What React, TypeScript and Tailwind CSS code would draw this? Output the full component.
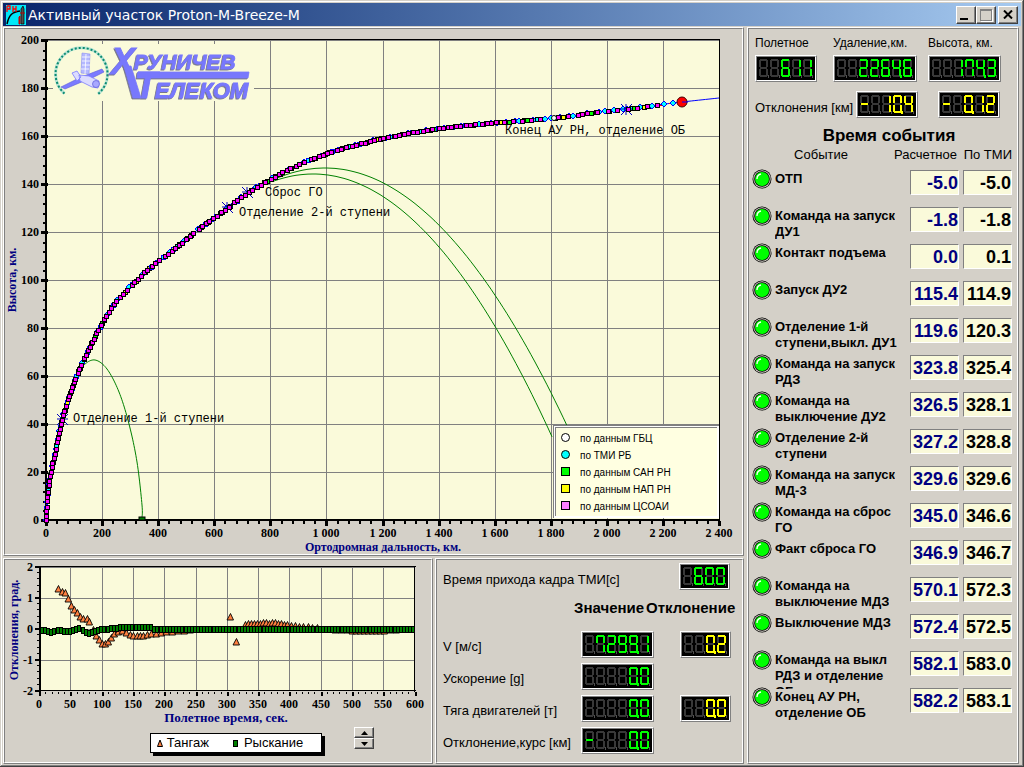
import React from 'react'

type Pt = [number, number]

const events = [
  { name: 'ОТП', plan: '-5.0', tmi: '-5.0' },
  { name: 'Команда на запуск\nДУ1', plan: '-1.8', tmi: '-1.8' },
  { name: 'Контакт подъема', plan: '0.0', tmi: '0.1' },
  { name: 'Запуск ДУ2', plan: '115.4', tmi: '114.9' },
  { name: 'Отделение 1-й\nступени,выкл. ДУ1', plan: '119.6', tmi: '120.3' },
  { name: 'Команда на запуск\nРДЗ', plan: '323.8', tmi: '325.4' },
  { name: 'Команда на\nвыключение ДУ2', plan: '326.5', tmi: '328.1' },
  { name: 'Отделение 2-й\nступени', plan: '327.2', tmi: '328.8' },
  { name: 'Команда на запуск\nМД-3', plan: '329.6', tmi: '329.6' },
  { name: 'Команда на сброс\nГО', plan: '345.0', tmi: '346.6' },
  { name: 'Факт сброса ГО', plan: '346.9', tmi: '346.7' },
  { name: 'Команда на\nвыключение МДЗ', plan: '570.1', tmi: '572.3' },
  { name: 'Выключение МДЗ', plan: '572.4', tmi: '572.5' },
  { name: 'Команда на выкл\nРДЗ и отделение\nОБ', plan: '582.1', tmi: '583.0' },
  { name: 'Конец АУ РН,\nотделение ОБ', plan: '582.2', tmi: '583.1' },
]

const readings = [
  { name: 'V [м/с]', value: ' 7299,1', dev: '  0,2' },
  { name: 'Ускорение [g]', value: '    0,0', dev: '' },
  { name: 'Тяга двигателей [т]', value: '    0,0', dev: '  0,0' },
  { name: 'Отклонение,курс [км]', value: '-   0,0', dev: '' },
]

// ascent track, chart coordinates
const track: Pt[] = [
  [46, 520], [47, 500], [50, 476], [55, 452], [62, 419], [74, 382], [88, 350], [102, 323],
  [113, 305], [125, 292], [147, 270], [170, 252], [200, 228], [227, 208], [247, 193],
  [272, 178], [297, 165], [317, 157], [340, 149], [367, 142], [383, 138], [420, 131],
  [450, 127], [480, 124], [530, 120], [563, 117], [597, 112], [627, 109], [657, 105],
  [682, 102], [719, 98],
]

const smooth = (pts: Pt[]) => {
  const out: Pt[] = []
  for (let i = 0; i < pts.length - 1; i++) {
    const a = pts[Math.max(i - 1, 0)]
    const b = pts[i]
    const c = pts[i + 1]
    const d = pts[Math.min(i + 2, pts.length - 1)]
    for (let k = 0; k < 12; k++) {
      const t = k / 12
      const f = (n: 0 | 1) =>
        0.5 *
        (2 * b[n] +
          (c[n] - a[n]) * t +
          (2 * a[n] - 5 * b[n] + 4 * c[n] - d[n]) * t * t +
          (3 * b[n] - a[n] - 3 * c[n] + d[n]) * t * t * t)
      out.push([f(0), f(1)])
    }
  }
  out.push(pts[pts.length - 1])
  return out
}

// points spaced along the line; the step list is repeated
const walk = (pts: Pt[], steps: number[], endX: number) => {
  const out: Pt[] = []
  let left = 0
  let n = 0
  for (let i = 1; i < pts.length; i++) {
    const [x0, y0] = pts[i - 1]
    const [x1, y1] = pts[i]
    const len = Math.hypot(x1 - x0, y1 - y0)
    let pos = left
    while (pos < len) {
      const x = x0 + ((x1 - x0) * pos) / len
      if (x > endX) return out
      out.push([Math.round(x), Math.round(y0 + ((y1 - y0) * pos) / len)])
      pos += steps[n++ % steps.length]
    }
    left = pos - len
  }
  return out
}

const line = smooth(track)
const toPoints = (pts: Pt[]) => pts.map((p) => p.join(',')).join(' ')
const under = walk(line, [4, 5, 3, 6], 655)
const magenta = walk(line, [4, 5, 4, 6, 4, 5, 7, 4, 5], 490).concat(
  [487, 491, 496, 504, 513, 522, 531, 540, 558, 568, 578, 582, 587, 597, 608, 617, 628, 637, 647, 657].map((x) => {
    const p = line.find((q) => q[0] >= x) || line[0]
    return [x, Math.round(p[1])] as Pt
  }),
)
const underColors = ['#00ffff', '#00ff00', '#ffff00', '#00ffff', '#00ff00', '#00ffff', '#ffff00']

const parabola = (px: number, py: number, a: number, from: number, to: number) => {
  const out: Pt[] = []
  for (let x = from; x <= to; x += 4) out.push([x, Math.round((py + a * (x - px) ** 2) * 10) / 10])
  return out
}
const stage1 = smooth([[76, 378], [84, 365], [95, 360], [107, 369], [119, 392], [129, 424], [137, 462], [142, 505], [142, 518]])
const stage2 = parabola(325, 168, 0.0044, 271, 567)
const fairing = parabola(313, 174, 0.0046, 272, 553)

const pitch: Pt[] = [
  [58, 589], [62, 592], [65, 593], [68, 599], [71, 606], [74, 610], [77, 613], [80, 617], [83, 619],
  [87, 619], [89, 622], [93, 630], [96, 636], [99, 640], [102, 644], [105, 644], [108, 642], [111, 638],
  [114, 634], [118, 632], [122, 631], [126, 633], [130, 635], [133, 636], [137, 636], [140, 636],
  [143, 636], [147, 635], [151, 634], [156, 634], [161, 633], [166, 632], [172, 632], [178, 631],
  [184, 631], [190, 630], [230, 617], [236, 642],
  [245, 625], [248, 624], [251, 624], [254, 624], [257, 624], [260, 624], [263, 623], [266, 623], [269, 624],
  [272, 623], [275, 623], [278, 624], [281, 624], [284, 625], [287, 625], [291, 626], [295, 626],
  [299, 627], [303, 627], [308, 627], [312, 628], [317, 628],
  [335, 630], [341, 630], [347, 630], [352, 631], [356, 631], [360, 631], [364, 631], [368, 631],
  [372, 631], [376, 631], [380, 631], [384, 631], [390, 630], [396, 630],
]

const yawY = (i: number) => {
  const start = [630, 630, 631, 632, 631, 630, 630, 631, 631, 631, 630, 629, 628, 630, 632, 633, 632, 631, 630, 629, 629, 629, 628, 628, 628]
  if (i < start.length) return start[i]
  return i < 36 ? 627 : 629
}

// a..g: top, upper right, lower right, bottom, lower left, upper left, middle
const segBoxes = [
  [1, 0, 7, 2], [7, 1, 2, 7], [7, 10, 2, 7], [1, 16, 7, 2], [0, 10, 2, 7], [0, 1, 2, 7], [1, 8, 7, 2],
]
const segMap: Record<string, string> = {
  '0': '012345', '1': '12', '2': '01346', '3': '01236', '4': '1256', '5': '02356',
  '6': '023456', '7': '0125', '8': '0123456', '9': '012356', '-': '6', ' ': '',
}

const Lcd = ({ value, color = '#00ff00' }: { value: string; color?: string }) => {
  const cells: { ch: string; comma: boolean }[] = []
  for (const ch of value) {
    if (ch === ',') cells[cells.length - 1].comma = true
    else cells.push({ ch, comma: false })
  }
  const width = cells.length * 11 + 3
  return (
    <div className="w-fit shrink-0 border border-t-white border-l-white border-r-[#808080] border-b-[#808080]">
      <div className="border border-t-[#808080] border-l-[#808080] border-r-white border-b-white bg-black">
        <svg width={width} height={23} role="img" aria-label={value.trim()} shapeRendering="crispEdges" className="block">
          {cells.map((cell, i) => (
            <g key={i} transform={`translate(${i * 11 + 2} 2)`}>
              {segBoxes.map(([x, y, w, h], s) => (
                <rect key={s} x={x} y={y} width={w} height={h} fill="#383838" />
              ))}
              {segBoxes.map(([x, y, w, h], s) =>
                segMap[cell.ch].includes(String(s)) ? <rect key={s} x={x} y={y} width={w} height={h} fill={color} /> : null,
              )}
              <rect x={9} y={16} width={1} height={3} fill={cell.comma ? color : '#505050'} />
              {cell.comma && <rect x={8} y={17} width={2} height={2} fill={color} />}
            </g>
          ))}
        </svg>
      </div>
    </div>
  )
}

const Panel = ({ className = '', children }: { className?: string; children: React.ReactNode }) => (
  <section className="border border-t-white border-l-white border-r-[#808080] border-b-[#808080]">
    <div className={`h-full border border-t-[#808080] border-l-[#808080] border-r-white border-b-white ${className}`}>
      {children}
    </div>
  </section>
)

const Led = () => (
  <svg width="20" height="20" viewBox="0 0 20 20" className="block shrink-0">
    <circle cx="10" cy="10" r="9.5" fill="#000" />
    <circle cx="10" cy="10" r="8.7" fill="#d4d0c8" />
    <circle cx="10" cy="10" r="7.8" fill="#000" />
    <circle cx="10" cy="10" r="7" fill="#00ff00" />
    <path d="M5 10a5 5 0 0 1 4-5" fill="none" stroke="#fff" strokeWidth="1.3" />
  </svg>
)

const Logo = () => (
  <g>
    <rect x="53" y="44" width="201" height="57" fill="#fafada" />
    <path d="M64.5 93.5A26 26 0 1 1 98 94" fill="none" stroke="#b8e4d4" strokeWidth="3" />
    <path d="M64.5 93.5A26 26 0 1 1 98 94" fill="none" stroke="#0a8a70" strokeWidth="2" strokeDasharray="2 2" />
    <path d="M61 87l20-10 3 4-19 8zM84 76l18-7 2 3-16 8z" fill="#7b7bff" stroke="#5a5ad8" strokeWidth=".6" />
    <path d="M82 53l8 1-1 20-8-1z" fill="#b4b8ff" stroke="#8c90f0" strokeWidth=".6" />
    <path d="M82 57h8M82 61h8M82 65h8M81 69h8M86 54l-1 20" stroke="#fff" strokeWidth=".8" />
    <path d="M72 73l5-2 4 6-4 4zM79 75l10 1 10 5-1 7-6-1-12-6z" fill="#dcdcff" stroke="#7b7bff" strokeWidth=".8" />
    <circle cx="96" cy="84" r="3.5" fill="#a8a8ff" stroke="#5a5ad8" strokeWidth=".7" />
    <g
      className="drop-shadow-[-1px_1px_0_#77778c]"
      fill="#7878fc"
      stroke="#7878fc"
      strokeWidth=".8"
      fontFamily="'Liberation Sans', sans-serif"
      fontWeight="700"
      fontStyle="italic"
    >
      <text x="111" y="74" fontSize="36">Х</text>
      <polygon points="124,66 131,66 141,98 133,98" />
      <text x="134" y="69" fontSize="21">РУНИЧЕВ</text>
      <polygon points="138,72 249,72 248,78 137,78" />
      <text x="135" y="98" fontSize="36">Т</text>
      <text x="155" y="98" fontSize="22">ЕЛЕКОМ</text>
    </g>
  </g>
)

const Star = ({ x, y }: { x: number; y: number }) => (
  <path d={`M${x - 5} ${y}h11M${x} ${y - 5}v11M${x - 5} ${y - 5}l11 11M${x + 6} ${y - 5}l-11 11`} stroke="#0000c0" fill="none" />
)

const seriesLegend = [
  { label: 'по данным ГБЦ', color: '#ffffff', round: true },
  { label: 'по ТМИ РБ', color: '#00ffff', round: true },
  { label: 'по данным САН РН', color: '#00ff00', round: false },
  { label: 'по данным НАП РН', color: '#ffff00', round: false },
  { label: 'по данным ЦСОАИ', color: '#ff80ff', round: false },
]

const AscentChart = () => {
  const gx = (i: number) => Math.round(46 + (i * 673) / 12)
  const gy = (i: number) => 520 - i * 48
  return (
    <svg viewBox="5 29 737 525" className="block h-auto w-full" fontFamily="'Liberation Serif', serif" fontSize="12" fontWeight="700">
      <g shapeRendering="crispEdges">
        <rect x="46" y="41" width="674" height="479" fill="#fafada" />
        {Array.from({ length: 11 }, (_, i) => (
          <rect key={i} x={gx(i + 1)} y="41" width="1" height="479" fill="#808080" />
        ))}
        {Array.from({ length: 10 }, (_, i) => (
          <rect key={i} x="46" y={gy(i + 1)} width="673" height="1" fill="#808080" />
        ))}
      </g>
      <Logo />
      <g shapeRendering="crispEdges">
        <rect x="45" y="39" width="675" height="1" />
        <rect x="719" y="39" width="1" height="482" />
        <rect x="45" y="39" width="2" height="482" />
        <rect x="45" y="519" width="675" height="2" />
        {Array.from({ length: 51 }, (_, i) => (
          <rect key={i} x={i % 5 ? 43 : 41} y={Math.round(520 - i * 9.6) - (i % 5 ? 0 : 1)} width={i % 5 ? 2 : 7} height={i % 5 ? 2 : 3} />
        ))}
        {Array.from({ length: 61 }, (_, i) => (
          <rect key={i} x={Math.round(46 + (i * 673) / 60) - 1} y="521" width={i % 5 ? 2 : 3} height={i % 5 ? 3 : 5} />
        ))}
      </g>
      {Array.from({ length: 11 }, (_, i) => (
        <text key={i} x="39" y={gy(i) + 4} textAnchor="end">{i * 20}</text>
      ))}
      {Array.from({ length: 13 }, (_, i) => (
        <text key={i} x={gx(i)} y="537" textAnchor="middle">
          {i < 5 ? i * 200 : `${Math.floor(i / 5)} ${String((i * 200) % 1000).padStart(3, '0')}`}
        </text>
      ))}
      <text x="383" y="551" textAnchor="middle" fill="#000080">Ортодромная дальность, км.</text>
      <text transform="translate(16 280) rotate(-90)" textAnchor="middle" fill="#000080">Высота, км.</text>

      <g fill="none" stroke="#008000">
        <polyline points={toPoints(stage1)} />
        <polyline points={toPoints(stage2)} />
        <polyline points={toPoints(fairing)} />
      </g>
      <rect x="139" y="517" width="6" height="3" fill="#008000" stroke="#000" />
      <polyline points={toPoints(line)} fill="none" stroke="#0000ff" />
      <g shapeRendering="crispEdges">
        {under.map(([x, y], i) =>
          i % 4 === 0 || (x > 490 && i % 3 === 0) ? (
            <path key={i} d={`M${x - 3} ${y}l3 -3 3 3 -3 3z`} fill="#00ffff" stroke="#0000ff" />
          ) : (
            <g key={i}>
              <rect x={x - 2} y={y - 2} width="5" height="5" fill={i % 3 ? '#000' : '#0000ff'} />
              <rect x={x - 1} y={y - 1} width="3" height="3" fill={underColors[i % 7]} />
            </g>
          ),
        )}
        <path d="M660 105h4M669 103h5" stroke="#ff0000" />
        <path d="M661 104l3-3 3 3-3 3zM670 103l3-3 3 3-3 3z" fill="#00ffff" stroke="#0000ff" />
      </g>
      <Star x={62} y={419} />
      <Star x={227} y={207} />
      <Star x={247} y={192} />
      <Star x={626} y={109} />
      <g shapeRendering="crispEdges">
        {magenta.map(([x, y], i) => (
          <g key={i}>
            <rect x={x - 2} y={y - 2} width="5" height="5" />
            <rect x={x - 1} y={y - 1} width="3" height="3" fill="#ff00ff" />
          </g>
        ))}
      </g>
      <circle cx="554" cy="118" r="2.5" fill="#fff" stroke="#000" />
      <circle cx="682" cy="102" r="5" fill="#ff0000" stroke="#400000" />
      <path d="M682 102h6" stroke="#0000ff" />

      <g fontFamily="'Liberation Mono', monospace" fontSize="12" fontWeight="400">
        <text x="73" y="422">Отделение 1-й ступени</text>
        <text x="239" y="216">Отделение 2-й ступени</text>
        <text x="265" y="196">Сброс ГО</text>
        <text x="505" y="134">Конец АУ РН, отделение ОБ</text>
      </g>

      <g fontFamily="'Liberation Sans', sans-serif" fontSize="10" fontWeight="400">
        <g shapeRendering="crispEdges">
          <rect x="553" y="425" width="166" height="93" fill="#808080" />
          <rect x="554" y="426" width="165" height="92" fill="#fff" />
          <rect x="555" y="427" width="162" height="89" fill="#808080" />
          <rect x="556" y="428" width="161" height="88" fill="#ffffe1" />
        </g>
        {seriesLegend.map((s, i) => (
          <g key={s.label} stroke="#000">
            {s.round ? (
              <circle cx="565.5" cy={437.5 + i * 17} r="4" fill={s.color} />
            ) : (
              <rect x="561.5" y={433.5 + i * 17} width="8" height="8" fill={s.color} />
            )}
            <text x="580" y={442 + i * 17} stroke="none">{s.label}</text>
          </g>
        ))}
      </g>
    </svg>
  )
}

const DeviationChart = () => {
  const gx = (i: number) => Math.round(39 + i * 31.3)
  return (
    <svg viewBox="5 560 426 167" className="block h-auto w-full" fontFamily="'Liberation Serif', serif" fontSize="12" fontWeight="700">
      <g shapeRendering="crispEdges">
        <rect x="40" y="567" width="375" height="124" fill="#fafada" />
        {Array.from({ length: 11 }, (_, i) => (
          <rect key={i} x={gx(i + 1)} y="567" width="1" height="124" fill="#808080" />
        ))}
        {[567, 598, 629, 660].map((y) => (
          <rect key={y} x="40" y={y} width="375" height="1" fill="#808080" />
        ))}
        <rect x="39" y="566" width="377" height="1" />
        <rect x="414" y="566" width="1" height="126" />
        <rect x="39" y="566" width="2" height="126" />
        <rect x="39" y="690" width="377" height="1" />
        {Array.from({ length: 21 }, (_, i) => (
          <rect key={i} x={i % 5 ? 37 : 35} y={Math.round(566 + i * 6.2)} width={i % 5 ? 2 : 4} height={i % 5 ? 1 : 2} />
        ))}
        {Array.from({ length: 61 }, (_, i) => (
          <rect key={i} x={Math.round(39 + i * 6.26)} y="692" width={i % 5 ? 1 : 2} height={i % 5 ? 2 : 4} />
        ))}
      </g>
      {[2, 1, 0, -1, -2].map((v, i) => (
        <text key={v} x="33" y={571 + i * 31} textAnchor="end">{v}</text>
      ))}
      {Array.from({ length: 13 }, (_, i) => (
        <text key={i} x={gx(i)} y="708" textAnchor="middle">{i * 50}</text>
      ))}
      <text x="226" y="722" textAnchor="middle" fontSize="13" fill="#000080">Полетное время, сек.</text>
      <text transform="translate(18 630) rotate(-90)" textAnchor="middle" fill="#000080">Отклонения, град.</text>
      {pitch.map(([x, y], i) => (
        <path key={i} d={`M${x - 3} ${y + 3}h6.500l-3-6.500z`} fill="#ff8040" stroke="#000" strokeWidth=".9" />
      ))}
      <g shapeRendering="crispEdges">
        {Array.from({ length: 120 }, (_, i) => {
          const x = Math.round(40 + i * 3.12)
          return (
            <g key={i}>
              <rect x={x} y={yawY(i) - 3} width="4" height="7" />
              <rect x={x + 1} y={yawY(i) - 2} width="2" height="5" fill="#008000" />
            </g>
          )
        })}
      </g>
    </svg>
  )
}

const bevel = 'border border-t-white border-l-white border-r-[#404040] border-b-[#404040] bg-[#d4d0c8] shadow-[inset_-1px_-1px_#808080]'

const TitleBar = () => (
  <header className="flex h-[23px] items-center bg-linear-to-r from-[#0a246a] to-[#a6caf0] pr-[3px] pl-[3px]">
    <svg width="20" height="20" viewBox="0 0 20 20" className="shrink-0">
      <rect width="20" height="20" fill="#00e8f8" />
      <path d="M1 19C3 10 6 7 14 6" fill="none" stroke="#000" strokeWidth="1.5" />
      <path d="M1 1v6M1 1h3v3H1M7 1v6M7 4h3M10 1v6" fill="none" stroke="#ff0000" strokeWidth="1.300" />
      <path d="M15 19V4l2-3 1 3v15z" fill="#505050" stroke="#000" strokeWidth=".7" />
      <path d="M13 19v-7l1-1v8zM14 8h5" fill="#ff0000" stroke="#c00000" />
    </svg>
    <h1 className="ml-0.5 flex-1 truncate font-['DejaVu_Sans',sans-serif] text-[14px] leading-5 text-white">
      Активный участок Proton-M-Breeze-M
    </h1>
    <button aria-label="Свернуть" className={`flex h-[18px] w-5 items-end justify-center pb-[3px] ${bevel}`}>
      <span className="mr-1 h-0.5 w-2 bg-black" />
    </button>
    <button aria-label="Развернуть" className={`flex h-[18px] w-5 items-center justify-center ${bevel}`}>
      <span className="h-3 w-3 border border-t-2 border-[#808080] shadow-[1px_1px_#fff]" />
    </button>
    <button aria-label="Закрыть" className={`ml-0.5 flex h-[18px] w-5 items-center justify-center ${bevel}`}>
      <svg width="10" height="9" viewBox="0 0 10 9">
        <path d="M1 .5l8 8M9 .5l-8 8" stroke="#000" strokeWidth="2" />
      </svg>
    </button>
  </header>
)

const App = () => {
  return (
    <div className="flex min-h-screen flex-col bg-[#d4d0c8] p-[3px] font-['Liberation_Sans',sans-serif] text-black shadow-[inset_-1px_-1px_#404040,inset_1px_1px_#d4d0c8,inset_-2px_-2px_#808080,inset_2px_2px_#fff]">
      <TitleBar />
      <main className="mt-px grid flex-1 grid-cols-[minmax(0,1fr)_272px] gap-[3px] pr-0.5">
        <div className="flex flex-col gap-0.5">
          <Panel>
            <AscentChart />
          </Panel>
          <div className="grid flex-1 grid-cols-[minmax(0,1fr)_309px] gap-0.5">
            <Panel>
              <DeviationChart />
              <div className="flex items-start justify-center gap-8 pl-[88px]">
                <div className="mt-1.5 flex h-5 items-center border border-black bg-white px-1.5 text-[13px] leading-4 shadow-[3px_3px_#000]">
                  <svg width="6" height="8" className="mr-1">
                    <path d="M.5 7.500h5L3 1z" fill="#ff8040" stroke="#000" />
                  </svg>
                  <span className="mr-6">Тангаж</span>
                  <span className="mr-1.5 h-[7px] w-[5px] border border-black bg-[#008000]" />
                  <span className="mr-3">Рыскание</span>
                </div>
                <div className="flex flex-col">
                  <button aria-label="Больше" className={`flex h-[11px] w-5 items-center justify-center ${bevel}`}>
                    <svg width="7" height="4"><path d="M0 4h7L3.500 0z" /></svg>
                  </button>
                  <button aria-label="Меньше" className={`flex h-[11px] w-5 items-center justify-center ${bevel}`}>
                    <svg width="7" height="4"><path d="M0 0h7L3.500 4z" /></svg>
                  </button>
                </div>
              </div>
            </Panel>
            <Panel className="pt-[3px] pl-1.5 text-[13px]">
              <div className="grid grid-cols-[236px_1fr] items-center">
                <span className="pt-1.5">Время прихода кадра ТМИ[с]</span>
                <Lcd value=" 600" />
              </div>
              <table className="w-full table-fixed border-collapse">
                <thead>
                  <tr className="h-[41px] text-left align-top text-[15px] leading-5">
                    <td className="w-[131px]" />
                    <th className="w-[72px] pt-2">Значение</th>
                    <th className="pt-2">Отклонение</th>
                  </tr>
                </thead>
                <tbody>
                  {readings.map((r) => (
                    <tr key={r.name} className="h-8 align-top">
                      <th className="pt-2 text-left leading-4 font-normal whitespace-nowrap">{r.name}</th>
                      <td className="pl-[7px]">
                        <Lcd value={r.value} />
                      </td>
                      <td className="pl-[34px]">{r.dev && <Lcd value={r.dev} color="#ffff00" />}</td>
                    </tr>
                  ))}
                </tbody>
              </table>
            </Panel>
          </div>
        </div>
        <Panel className="px-[3px] pt-1.5 text-[12px]">
          <div className="pl-[3px]">
            <div className="grid grid-cols-[78px_95px_73px]">
              {[
                { name: 'Полетное', value: '  611' },
                { name: 'Удаление,км.', value: '  2264,6' },
                { name: 'Высота, км.', value: '  174,3' },
              ].map((r) => (
                <div key={r.name}>
                  <div className="mb-1 leading-4 whitespace-nowrap">{r.name}</div>
                  <Lcd value={r.value} />
                </div>
              ))}
            </div>
            <div className="mt-[9px] grid grid-cols-[101px_82px_62px] items-center text-[13px]">
              <span className="pt-1.5 leading-4 whitespace-nowrap">Отклонения [км]</span>
              <Lcd value="- 10,4" color="#ffff00" />
              <Lcd value="- 0,12" color="#ffff00" />
            </div>
          </div>
          <h2 className="mt-2 ml-3 text-center text-[17px] leading-5 font-bold">Время события</h2>
          <table className="w-full table-fixed border-collapse">
            <thead>
              <tr className="h-[25px] align-top text-[13px] leading-4">
                <th className="pt-px pr-5 text-center font-normal">Событие</th>
                <th className="w-[53px] pt-px font-normal">
                  <div className="flex justify-end pr-1.5">Расчетное</div>
                </th>
                <th className="w-[51px] pt-px font-normal">
                  <div className="flex justify-end pr-0.5 whitespace-nowrap">По ТМИ</div>
                </th>
              </tr>
            </thead>
            <tbody>
              {events.map((e) => (
                <tr key={e.name} className="h-[37px] align-top">
                  <td>
                    <div className="flex gap-[3px]">
                      <div className="-mt-0.5">
                        <Led />
                      </div>
                      <div className="h-[37px] overflow-hidden text-[13px] leading-4 font-bold whitespace-pre">{e.name}</div>
                    </div>
                  </td>
                  <td>
                    <div className="-mt-px h-[25px] w-[49px] border border-t-[#808080] border-l-[#808080] border-r-white border-b-white bg-[#fafada] text-right text-[18px] leading-6 font-bold text-[#000080]">
                      {e.plan}
                    </div>
                  </td>
                  <td>
                    <div className="-mt-px h-[25px] w-[49px] border border-t-[#808080] border-l-[#808080] border-r-white border-b-white bg-[#fafada] text-right text-[18px] leading-6 font-bold">
                      {e.tmi}
                    </div>
                  </td>
                </tr>
              ))}
            </tbody>
          </table>
        </Panel>
      </main>
    </div>
  )
}

export default App
